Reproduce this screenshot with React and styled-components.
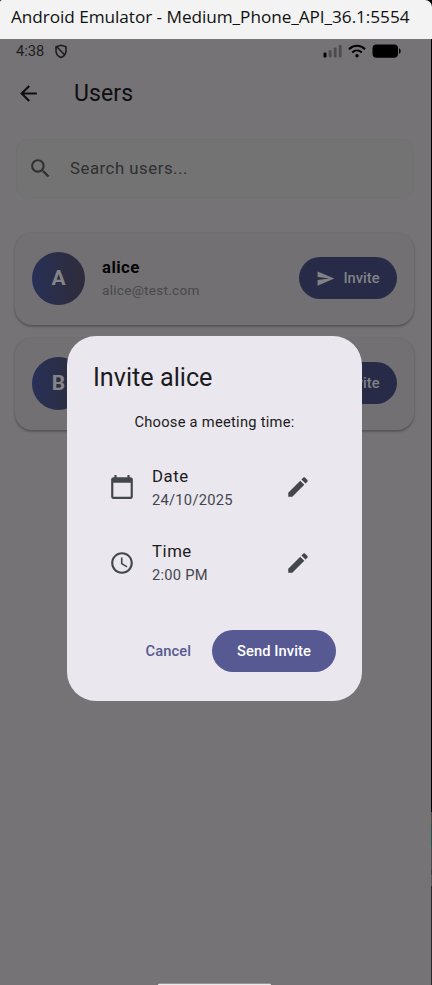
import React from "react";
import styled, { createGlobalStyle } from "styled-components";

const Global = createGlobalStyle`
  * { box-sizing: border-box; }
  html, body { margin: 0; padding: 0; background: #000; }
  body { font-family: Roboto, "Liberation Sans", sans-serif; }
  button { font: inherit; border: 0; padding: 0; }
`;

const Window = styled.div`
  width: 432px;
  height: 985px;
  display: flex;
  flex-direction: column;
  overflow: hidden;
`;
const TitleBar = styled.header`
  flex: 0 0 39px;
  width: 431.5px;
  padding-left: 11px;
  border-radius: 2px 7px 0 0;
  background: #f3f3f3;
  color: #111;
  font: 400 17.2px/34px "Open Sans", "Noto Sans", sans-serif;
  letter-spacing: -0.05px;
  white-space: nowrap;
`;
const Body = styled.div`
  flex: 1;
  display: flex;
  background: #000;
`;
const Edge = styled.div`
  width: 1px;
  height: 100%;
  background: linear-gradient(#000 773px, #4d4938 773px 787px, #24534d 787px 807px, #4b4b4d 807px 830px, #493a3d 830px 836px, #555 836px 847px, #292929 847px);
`;
const Screen = styled.main`
  position: relative;
  width: 431px;
  height: 946px;
  display: flex;
  flex-direction: column;
  background: #757376;
`;
const StatusBar = styled.div`
  height: 24px;
  padding: 0 30px 0 16px;
  display: flex;
  align-items: center;
  color: #1d1d1f;
  font-size: 14.7px;
`;
const StatusIcons = styled.div`
  display: flex;
  align-items: center;
  margin-left: auto;
`;
const AppBar = styled.div`
  height: 60px;
  padding-left: 16px;
  display: flex;
  align-items: center;
  gap: 33px;
  color: #0e0e11;
`;
const Heading = styled.h1`
  margin: 2px 0 0;
  font-size: 23px;
  line-height: 30px;
  font-weight: 400;
  letter-spacing: 0.1px;
`;
const SearchField = styled.div`
  margin: 16px 17px 0 15.5px;
  height: 58.5px;
  padding-left: 11.5px;
  display: flex;
  align-items: center;
  gap: 17px;
  border: 1px solid #6f7071;
  border-radius: 12px;
  background: #737373;
  color: #2f2f31;
  font-size: 16.8px;
  letter-spacing: 0.52px;
`;
const UserList = styled.div`
  margin: 35px 17px 0 15px;
  display: flex;
  flex-direction: column;
  gap: 13px;
`;
const UserCard = styled.article`
  height: 92px;
  padding: 0 17px 1px;
  display: flex;
  align-items: center;
  border-radius: 17px;
  background: #727073;
  box-shadow: 0 1px 3px rgba(30, 35, 35, 0.25), 0 1.5px 1.5px rgba(30, 35, 35, 0.2);
`;
const Avatar = styled.div`
  width: 53px;
  height: 53px;
  border-radius: 50%;
  display: grid;
  place-items: center;
  background: linear-gradient(90deg, #283056, #2e2c3a);
  color: #858587;
  font-size: 21px;
  font-weight: 700;
`;
const UserText = styled.div`
  flex: 1;
  padding-left: 17px;
`;
const UserName = styled.div`
  color: #050506;
  font-size: 16.8px;
  line-height: 24px;
  font-weight: 700;
  letter-spacing: 0.4px;
`;
const Email = styled.div`
  color: #48484a;
  font-size: 13.6px;
  line-height: 22px;
  letter-spacing: 0.26px;
`;
const InviteButton = styled.button`
  width: 98px;
  height: 42px;
  display: flex;
  align-items: center;
  justify-content: center;
  gap: 8px;
  border-radius: 21px;
  background: #272b48;
  color: #828285;
  font-size: 14.7px;
  font-weight: 500;
`;
const Dialog = styled.section`
  position: absolute;
  left: 67px;
  top: 297px;
  width: 295px;
  height: 365px;
  padding: 25px 26px 29px;
  display: flex;
  flex-direction: column;
  border-radius: 29px;
  background: #eae7ee;
  color: #1c1b20;
`;
const DialogTitle = styled.h2`
  margin: 0;
  font-size: 25.2px;
  line-height: 34px;
  font-weight: 400;
`;
const Prompt = styled.p`
  margin: 17px 0 16.5px;
  text-align: center;
  font-size: 14.7px;
  line-height: 21px;
  letter-spacing: 0.26px;
`;
const PickerRow = styled.div`
  height: 75.5px;
  padding: 0 25px 0 16px;
  display: flex;
  align-items: center;
  color: #44464e;
`;
const PickerText = styled.div`
  flex: 1;
  padding-left: 17px;
`;
const PickerLabel = styled.div`
  color: #1c1b20;
  font-size: 16.8px;
  line-height: 25px;
  letter-spacing: 0.52px;
`;
const PickerValue = styled.div`
  font-size: 14.7px;
  line-height: 22px;
  letter-spacing: 0.26px;
`;
const Actions = styled.div`
  margin-top: auto;
  display: flex;
  justify-content: flex-end;
  align-items: center;
  gap: 21px;
`;
const TextButton = styled.button`
  background: none;
  color: #575992;
  font-size: 14.7px;
  font-weight: 500;
  letter-spacing: 0.1px;
`;
const FilledButton = styled(TextButton)`
  width: 124px;
  height: 42px;
  border-radius: 21px;
  background: #575992;
  color: #fff;
`;
const HomeHandle = styled.div`
  align-self: center;
  margin: auto 2px 0 0;
  width: 113px;
  height: 2px;
  border-radius: 2px 2px 0 0;
  background: linear-gradient(#989698 50%, #e9e9e9 50%);
`;
const Glyph = styled.svg`
  display: block;
  flex: none;
  fill: currentColor;
  margin-left: ${(p) => p.$before || 0}px;
`;

const paths = {
  back: "M20 11H7.83l5.59-5.59L12 4l-8 8 8 8 1.41-1.41L7.83 13H20v-2z",
  search: "M15.5 14h-.79l-.28-.27A6.471 6.471 0 0 0 16 9.5 6.5 6.5 0 1 0 9.5 16c1.61 0 3.09-.59 4.23-1.57l.27.28v.79l5 4.99L20.49 19l-4.99-5zm-6 0C7.01 14 5 11.99 5 9.5S7.01 5 9.5 5 14 7.01 14 9.5 11.99 14 9.5 14z",
  send: "M2.01 21L23 12 2.01 3 2 10l15 2-15 2z",
  calendar: "M20 3h-1V1h-2v2H7V1H5v2H4c-1.1 0-2 .9-2 2v16c0 1.1.9 2 2 2h16c1.1 0 2-.9 2-2V5c0-1.1-.9-2-2-2zm0 18H4V8h16v13z",
  clock: "M11.99 2C6.47 2 2 6.48 2 12s4.47 10 9.99 10C17.52 22 22 17.52 22 12S17.52 2 11.99 2zM12 20c-4.42 0-8-3.58-8-8s3.58-8 8-8 8 3.58 8 8-3.58 8-8 8zm.5-13H11v6l5.25 3.15.75-1.23-4.5-2.67z",
  edit: "M3 17.25V21h3.75L17.81 9.94l-3.75-3.75L3 17.25zM20.71 7.04c.39-.39.39-1.02 0-1.41l-2.34-2.34c-.39-.39-1.02-.39-1.41 0l-1.83 1.83 3.75 3.75 1.83-1.83z",
};

const Icon = ({ name, size = 25 }) => (
  <Glyph width={size} height={size} viewBox="0 0 24 24">
    <path d={paths[name]} />
  </Glyph>
);

const Shield = () => (
  <Glyph $before={10} width="14" height="15" viewBox="0 0 14 15">
    <path d="M7 1.3 L12 2.7 V7 C12 10.2 10 12.3 7 13.6 C4 12.3 2 10.2 2 7 V2.7 Z M3 3 L10.8 11" fill="none" stroke="currentColor" strokeWidth="1.6" strokeLinejoin="round" />
  </Glyph>
);

const Signal = () => (
  <Glyph width="19" height="14" viewBox="0 0 19 14">
    <rect x="0.5" y="8.5" width="3" height="5" rx="1.2" fill="#000" />
    <g fill="#4c4b4d">
      <rect x="5.7" y="6" width="2.8" height="7.5" rx="1" />
      <rect x="10.8" y="3.5" width="2.8" height="10" rx="1" />
      <rect x="15.8" y="1" width="2.8" height="12.5" rx="1" />
    </g>
  </Glyph>
);

const Wifi = () => (
  <Glyph $before={6} width="18" height="14" viewBox="0 0 18 14">
    <g fill="none" stroke="#000" strokeWidth="2">
      <path d="M1 5.2 C5.5 .6 12.5 .6 17 5.2" />
      <path d="M4.2 8.4 C7 5.8 11 5.8 13.8 8.4" />
    </g>
    <circle cx="9" cy="11.7" r="1.7" fill="#000" />
  </Glyph>
);

const Battery = () => (
  <Glyph $before={6} width="29" height="14" viewBox="0 0 29 14">
    <rect x="0.5" y="0.5" width="25.5" height="13.2" rx="4" fill="#000" />
    <path d="M27 4.2 Q28.7 4.6 28.7 7 T27 9.8 Z" fill="#000" />
  </Glyph>
);

const users = [
  { initial: "A", name: "alice", email: "alice@test.com" },
  { initial: "B" },
];

const slots = [
  { icon: "calendar", label: "Date", value: "24/10/2025" },
  { icon: "clock", label: "Time", value: "2:00 PM" },
];

export default function App() {
  return (
    <>
      <Global />
      <Window>
        <TitleBar>Android Emulator - Medium_Phone_API_36.1:5554</TitleBar>
        <Body>
          <Screen>
            <StatusBar>
              4:38
              <Shield />
              <StatusIcons>
                <Signal />
                <Wifi />
                <Battery />
              </StatusIcons>
            </StatusBar>
            <AppBar>
              <Icon name="back" />
              <Heading>Users</Heading>
            </AppBar>
            <SearchField>
              <Icon name="search" />
              Search users...
            </SearchField>
            <UserList>
              {users.map((user) => (
                <UserCard key={user.initial}>
                  <Avatar>{user.initial}</Avatar>
                  <UserText>
                    {user.name && <UserName>{user.name}</UserName>}
                    {user.email && <Email>{user.email}</Email>}
                  </UserText>
                  <InviteButton>
                    <Icon name="send" size={19} />
                    Invite
                  </InviteButton>
                </UserCard>
              ))}
            </UserList>
            <HomeHandle />
            <Dialog role="dialog">
              <DialogTitle>Invite alice</DialogTitle>
              <Prompt>Choose a meeting time:</Prompt>
              {slots.map((slot) => (
                <PickerRow key={slot.label}>
                  <Icon name={slot.icon} size={26} />
                  <PickerText>
                    <PickerLabel>{slot.label}</PickerLabel>
                    <PickerValue>{slot.value}</PickerValue>
                  </PickerText>
                  <Icon name="edit" size={26} />
                </PickerRow>
              ))}
              <Actions>
                <TextButton>Cancel</TextButton>
                <FilledButton>Send Invite</FilledButton>
              </Actions>
            </Dialog>
          </Screen>
          <Edge />
        </Body>
      </Window>
    </>
  );
}
